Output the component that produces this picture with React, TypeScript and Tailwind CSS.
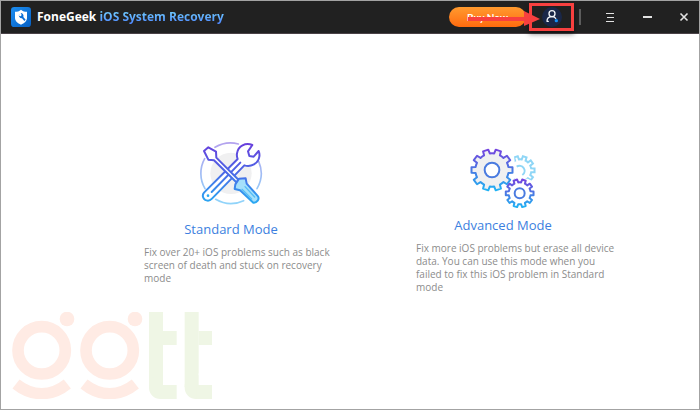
import React from "react";

interface GearProps {
  cx: number;
  cy: number;
  outer: number;
  inner: number;
}

const GEAR_TEETH = 10;

// Closed outline of a ten-toothed gear, one tooth on each side of twelve o'clock
const gearPath = ({ cx, cy, outer, inner }: GearProps): string => {
  const step = (Math.PI * 2) / GEAR_TEETH;
  const point = (radius: number, angle: number) =>
    `${(cx + radius * Math.sin(angle)).toFixed(1)} ${(cy - radius * Math.cos(angle)).toFixed(1)}`;

  const parts: string[] = [];
  for (let i = 0; i < GEAR_TEETH; i++) {
    const a = step * (i + 0.5);
    parts.push(`${i === 0 ? "M" : "L"}${point(inner, a - step * 0.29)}`);
    parts.push(`L${point(outer, a - step * 0.21)}`);
    parts.push(`L${point(outer, a + step * 0.21)}`);
    parts.push(`L${point(inner, a + step * 0.29)}`);
    parts.push(`A${inner} ${inner} 0 0 1 ${point(inner, a + step * 0.71)}`);
  }
  return parts.join(" ") + "Z";
};

const AppLogo: React.FC = () => (
  <svg viewBox="0 0 60 60" className="size-5 shrink-0" aria-hidden="true">
    <defs>
      <linearGradient id="logo" x1="0" y1="0" x2="1" y2="1">
        <stop offset="0" stopColor="#1c8df0" />
        <stop offset="1" stopColor="#0560c4" />
      </linearGradient>
    </defs>
    <rect width="60" height="60" rx="10" fill="url(#logo)" />
    <path d="M30 8C25 13 18 14 12 14V32C12 42 20 48 30 53C40 48 48 42 48 32V14C42 14 35 13 30 8Z" fill="#fff" />
    <path
      d="M25 20A9 9 0 0 0 33 34L40 42L44 38L37 30A9 9 0 0 0 29 18L32 24L29 28L24 26Z"
      fill="#0c6fd6"
    />
  </svg>
);

const ToolsIcon: React.FC = () => (
  <svg viewBox="40 30 195 219" className="h-[73px] w-[65px]" fill="none" aria-hidden="true">
    <defs>
      <linearGradient id="tools" gradientUnits="userSpaceOnUse" x1="0" y1="38" x2="0" y2="220">
        <stop offset="0" stopColor="#6a3fdc" />
        <stop offset="0.5" stopColor="#4a68e6" />
        <stop offset="1" stopColor="#2aa9f2" />
      </linearGradient>
      <linearGradient id="ring" gradientUnits="userSpaceOnUse" x1="0" y1="38" x2="0" y2="220">
        <stop offset="0" stopColor="#b3a2ee" />
        <stop offset="1" stopColor="#90d4fa" />
      </linearGradient>
    </defs>
    <circle cx="136" cy="130" r="62" fill="#f0f0f1" />
    <g stroke="url(#ring)" strokeWidth="5" strokeLinecap="round">
      <path d="M88 52A91 91 0 0 1 158 42" />
      <path d="M57 86A91 91 0 0 0 58 176" />
      <path d="M90 208A91 91 0 0 0 174 212" />
      <path d="M219 94A91 91 0 0 1 214 176" />
    </g>
    <g stroke="url(#tools)" strokeWidth="6" strokeLinejoin="round" strokeLinecap="round">
      <path
        d="M200 45C180 36 157 48 154 70C153 76 154 82 156 87L55 188C47 198 54 212 67 212C72 212 75 210 79 206L176 106C196 112 218 101 221 80C222 74 221 68 219 63L204 80L191 78L187 64Z"
        fill="#fff"
      />
      <path d="M78 186L164 98" />
      <path d="M55 63L68 52L91 65L92 83L159 150L152 157L85 91L68 89Z" fill="#fff" />
      <path d="M160 146L180 145L183 161L217 199C222 207 214 219 203 218L163 181L147 177L149 163Z" fill="#a5e0fb" />
      <path d="M178 170L207 201M169 178L198 207" stroke="#55bdf5" strokeWidth="4" />
    </g>
    <circle cx="67" cy="197" r="4" fill="#2aa9f2" />
  </svg>
);

const GearsIcon: React.FC = () => (
  <svg viewBox="27 0 198 207" className="h-[69px] w-[66px]" fill="none" aria-hidden="true">
    <defs>
      <linearGradient id="gear" x1="0" y1="0" x2="0" y2="1">
        <stop offset="0" stopColor="#7446df" />
        <stop offset="0.5" stopColor="#4a78e2" />
        <stop offset="1" stopColor="#22b2f4" />
      </linearGradient>
      <clipPath id="back">
        <path d="M158 40H230V112L212 122L200 116H160V100L164 90Z" />
      </clipPath>
    </defs>
    <path
      d={gearPath({ cx: 178, cy: 91, outer: 43, inner: 33 })}
      stroke="#8fd6f6"
      strokeWidth="6"
      clipPath="url(#back)"
    />
    <path d="M167 80A15 15 0 1 1 184 105" stroke="#8fd6f6" strokeWidth="6" />
    <path
      d={gearPath({ cx: 93, cy: 90, outer: 62, inner: 50 })}
      fill="#f0f0f1"
      stroke="url(#gear)"
      strokeWidth="6"
      strokeLinejoin="round"
    />
    <circle cx="93" cy="90" r="22" fill="#fff" stroke="#4a7be0" strokeWidth="6" />
    <path
      d={gearPath({ cx: 176, cy: 160, outer: 42, inner: 33 })}
      fill="#fff"
      stroke="url(#gear)"
      strokeWidth="6"
      strokeLinejoin="round"
    />
    <circle cx="176" cy="160" r="15" stroke="#4a7be0" strokeWidth="6" />
  </svg>
);

const Watermark: React.FC = () => (
  <svg viewBox="36 36 600 261" className="h-[87px] w-[200px]" aria-hidden="true">
    {[0, 204].map((x) => (
      <g key={x} transform={`translate(${x} 0)`}>
        <circle cx="125" cy="151" r="71" fill="none" stroke="#ffebe4" strokeWidth="35" />
        <circle cx="201" cy="57" r="22" fill="#ffebe4" />
        <path d="M48 252Q84 281 125 281T202 252" fill="none" stroke="#ffebe4" strokeWidth="34" />
      </g>
    ))}
    {[0, 107].map((x) => (
      <g key={x} transform={`translate(${x} 0)`} fill="#eff6e5">
        <rect x="447" y="36" width="42" height="225" />
        <rect x="489" y="93" width="41" height="42" />
        <rect x="447" y="225" width="72" height="72" rx="34" />
        <rect x="483" y="255" width="47" height="42" />
        <rect x="489" y="220" width="41" height="35" fill="#fff" />
      </g>
    ))}
  </svg>
);

interface ModeCardProps {
  icon: React.ReactNode;
  title: string;
  description: string;
}

const ModeCard: React.FC<ModeCardProps> = ({ icon, title, description }) => (
  <article className="w-[202px]">
    <div className="flex flex-col items-center pr-7">
      {icon}
      <h2 className="mt-1 text-[13px] leading-6 whitespace-nowrap text-[#3c7fe0]">{title}</h2>
    </div>
    <p className="mt-[5px] text-[10px] leading-[13px] text-[#8c8c8c]">{description}</p>
  </article>
);

const TitleBar: React.FC = () => (
  <header className="flex h-[33px] items-center border-b border-[#4a4247] bg-[#212121] pr-2 pl-[10px]">
    <AppLogo />
    <h1 className="ml-[6px] text-[12px] font-bold whitespace-nowrap text-white">
      FoneGeek{" "}
      <span className="bg-linear-to-b from-[#7fe0ff] to-[#4c7dff] bg-clip-text text-transparent">
        iOS System Recovery
      </span>
    </h1>

    <div className="relative ml-auto flex items-center">
      <button className="h-5 w-[77px] rounded-full bg-linear-to-b from-[#ff9a2e] to-[#ff6a0c] font-[Lato,sans-serif] text-[10px] leading-5 font-bold text-white">
        Buy Now
      </button>
      <button
        aria-label="Account"
        className="ml-[3px] flex h-[28px] w-[45px] items-center justify-center border-3 border-[#f8403f] shadow-[0_3px_5px_rgba(0,0,0,0.45)]"
      >
        <svg viewBox="0 0 66 60" className="h-5 w-[22px]" fill="none" aria-hidden="true">
          <circle cx="33" cy="30" r="30" fill="#1a2748" />
          <g stroke="#f2f4f8" strokeWidth="4" strokeLinecap="round">
            <circle cx="33" cy="20" r="9" />
            <path d="M18 43C18 34 24 29 33 29C38 29 42 31 44 34M18 43H22" />
          </g>
          <circle cx="46" cy="41" r="5" fill="#1590f5" />
        </svg>
      </button>
      <svg
        viewBox="0 0 72 16"
        className="pointer-events-none absolute top-[8px] left-[19px] h-4 w-[72px]"
        aria-hidden="true"
      >
        <path d="M0 6H56V0L72 8L56 15V10H0Z" fill="#f8403f" />
      </svg>
    </div>

    <div className="ml-[5px] h-4 w-[2px] bg-[#5c5c5c]" />

    <nav className="ml-[22px] flex items-center gap-[23px] text-[#e2e2e2]">
      <button aria-label="Menu">
        <svg viewBox="0 0 14 14" className="size-[14px]" stroke="currentColor" aria-hidden="true">
          <path d="M3 3.5H11M4 7.5H11M3 11.5H11" />
        </svg>
      </button>
      <button aria-label="Minimize">
        <svg viewBox="0 0 14 14" className="size-[14px]" stroke="currentColor" strokeWidth="2" aria-hidden="true">
          <path d="M3 7H12" />
        </svg>
      </button>
      <button aria-label="Close">
        <svg viewBox="0 0 14 14" className="size-[14px]" stroke="currentColor" strokeWidth="1.6" aria-hidden="true">
          <path d="M3.5 3.5L10.5 10.5M10.5 3.5L3.5 10.5" />
        </svg>
      </button>
    </nav>
  </header>
);

const App: React.FC = () => {
  return (
    <div className="flex min-h-screen flex-col border border-[#a3a3a3] bg-white font-['Open_Sans','Noto_Sans',sans-serif]">
      <TitleBar />

      <main className="flex flex-1 flex-wrap justify-center gap-x-[70px] gap-y-8 pt-[106px] pl-[62px]">
        <ModeCard
          icon={<ToolsIcon />}
          title="Standard Mode"
          description="Fix over 20+ iOS problems such as black screen of death and stuck on recovery mode"
        />
        <ModeCard
          icon={<GearsIcon />}
          title="Advanced Mode"
          description="Fix more iOS problems but erase all device data. You can use this mode when you failed to fix this iOS problem in Standard mode"
        />
      </main>

      <footer className="pb-[10px] pl-[11px]">
        <Watermark />
      </footer>
    </div>
  );
};

export default App;
